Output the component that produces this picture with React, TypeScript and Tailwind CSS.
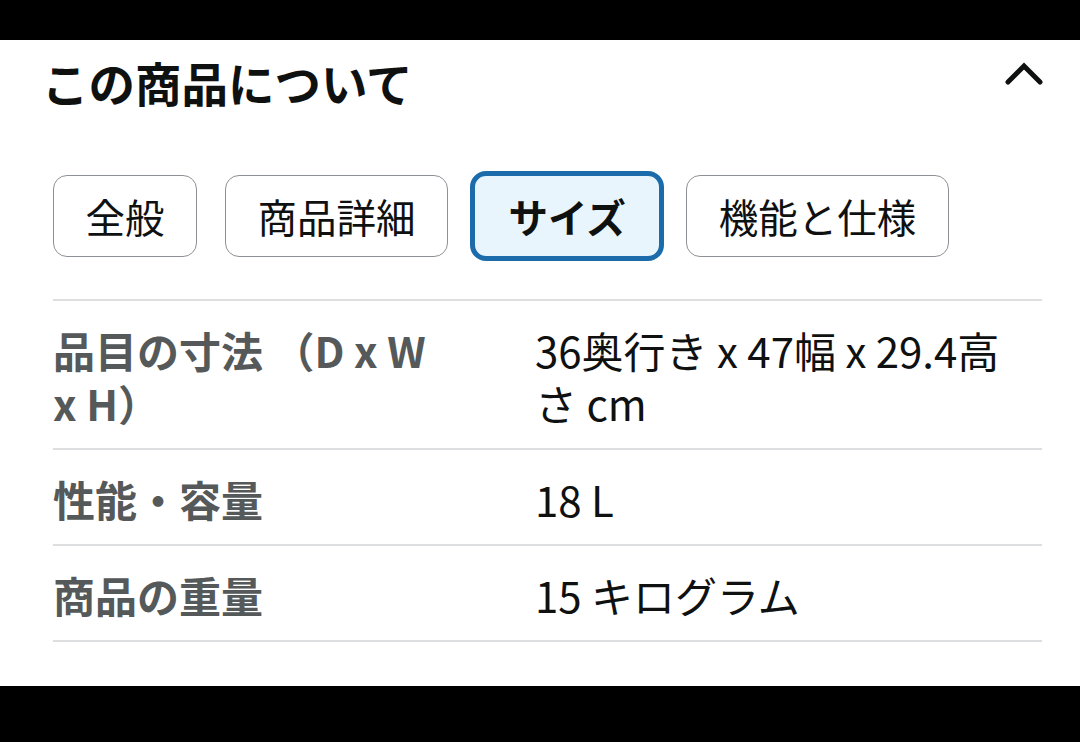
import React from "react";

const tabs = [
  { label: "全般", active: false },
  { label: "商品詳細", active: false },
  { label: "サイズ", active: true },
  { label: "機能と仕様", active: false },
];

const rows = [
  { k: "品目の寸法 （D x W x H）", v: "36奥行き x 47幅 x 29.4高さ cm" },
  { k: "性能・容量", v: "18 L" },
  { k: "商品の重量", v: "15 キログラム" },
];

export default function App() {
  return (
    <div
      className="w-[1080px] h-[742px] bg-black flex flex-col overflow-hidden"
      style={{ fontFamily: '"Noto Sans CJK JP", "Noto Sans", sans-serif' }}
    >
      <div className="h-[40px] shrink-0" />
      <div className="h-[646px] shrink-0 bg-white pl-[53px] pr-[38px]">
        <div className="flex items-start justify-between mt-[14px]">
          <h2 className="-ml-[11px] text-[46.5px] leading-[55px] font-bold text-[#0f1111]">
            この商品について
          </h2>
          <svg
            width="40"
            height="28"
            viewBox="0 0 40 28"
            className="mt-[6px] -mr-[2px]"
          >
            <polyline
              points="4,22 20,6 36,22"
              fill="none"
              stroke="#0f1111"
              strokeWidth="5"
              strokeLinecap="round"
              strokeLinejoin="miter"
            />
          </svg>
        </div>

        <div className="flex items-center h-[90px] mt-[62px] gap-[28px]">
          {tabs.map((t) =>
            t.active ? (
              <div
                key={t.label}
                className="h-[90px] flex items-center px-[33.5px] border-[5px] border-[#1c6cab] bg-[#e8f5fc] rounded-[16px] text-[39.5px] font-bold text-[#0f1111] -mx-[6px]"
              >
                {t.label}
              </div>
            ) : (
              <div
                key={t.label}
                className="h-[82px] flex items-center px-[31.5px] border-[1.5px] border-[#8d9096] rounded-[14px] text-[39.5px] text-[#0f1111]"
              >
                {t.label}
              </div>
            )
          )}
        </div>

        <div className="mt-[38px] border-t-2 border-[#dddfe0]">
          {rows.map((r) => (
            <div
              key={r.k}
              className="grid grid-cols-[384px_1fr] gap-x-[98px] border-b-2 border-[#dddfe0] pt-[22px] pb-[19px] text-[42px] leading-[53px]"
            >
              <div className="font-bold text-[#565959]">{r.k}</div>
              <div className="text-[#0f1111] pr-[20px]">{r.v}</div>
            </div>
          ))}
        </div>
      </div>
    </div>
  );
}
